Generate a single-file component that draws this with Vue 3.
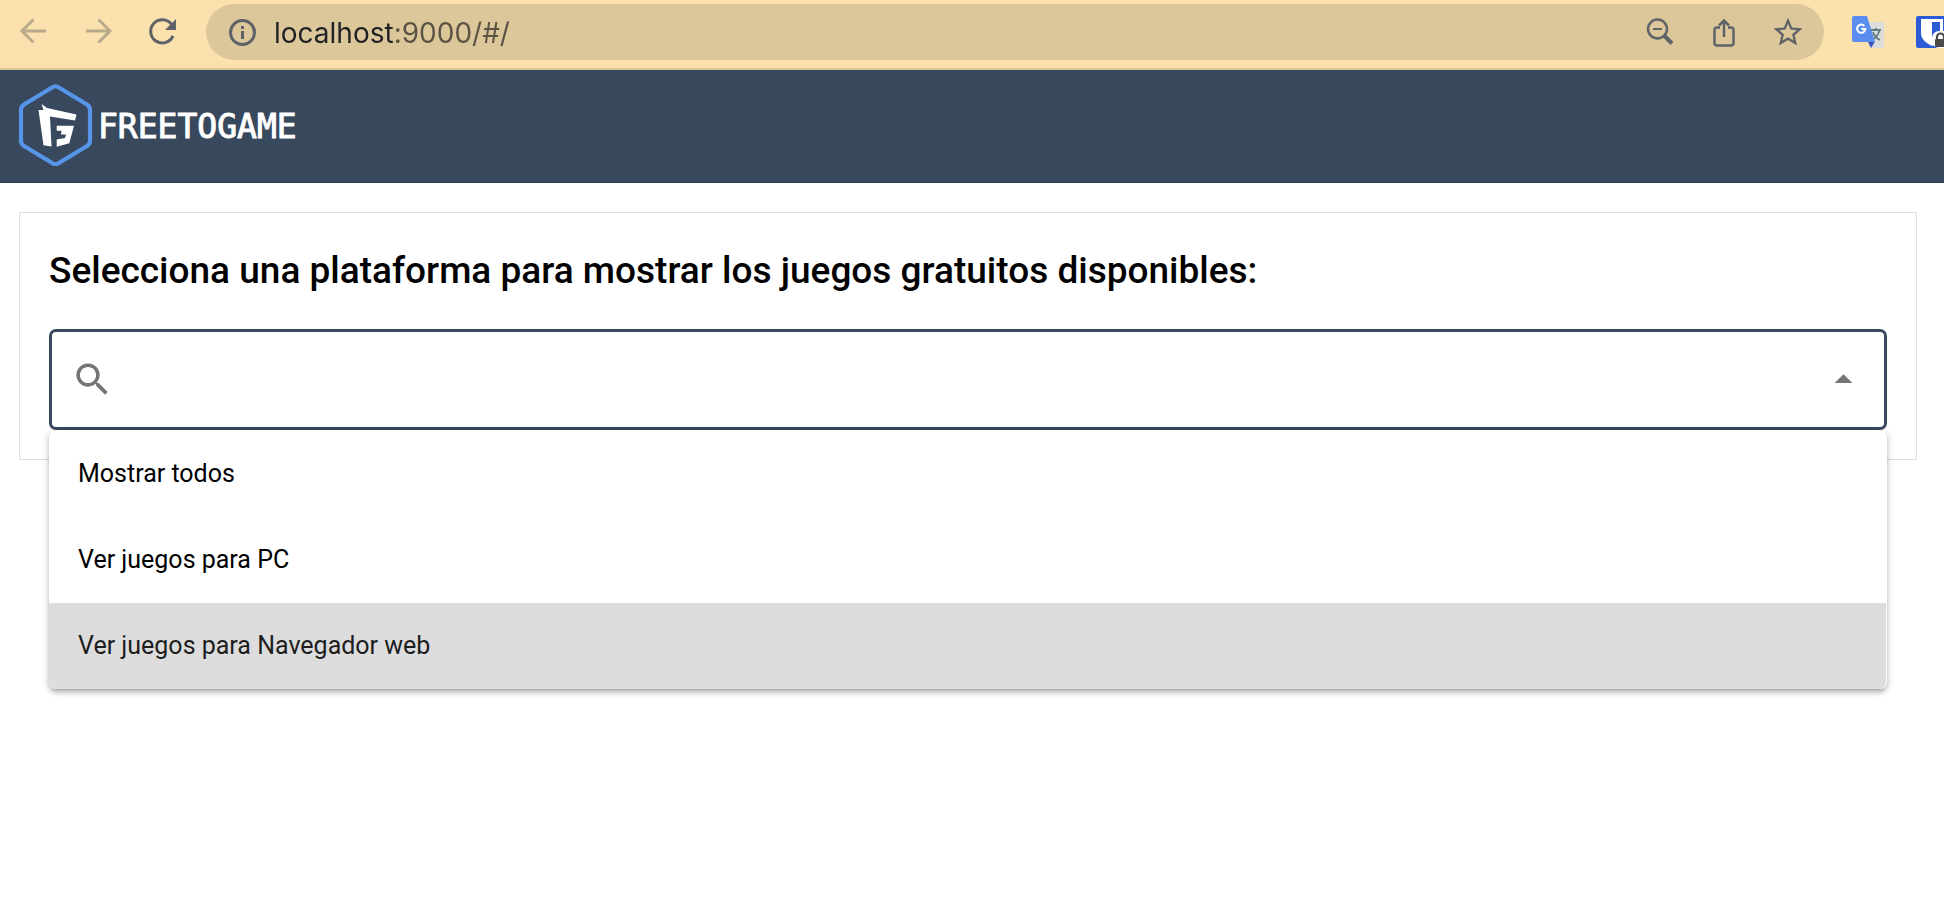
<script setup>
import { ref } from 'vue'

const address = ref('localhost:9000/#/')
const open = ref(true)
const selected = ref('')
const highlighted = ref(2)
const platforms = ['Mostrar todos', 'Ver juegos para PC', 'Ver juegos para Navegador web']

function choose(option) {
  selected.value = option
  open.value = false
}
</script>

<template>
  <div class="page">
    <div class="toolbar">
      <button class="tool faded" type="button" aria-label="Atrás">
        <svg width="40" height="40" viewBox="0 0 40 40"><path d="M32 19H8M19.500 7.500 8 19l11.500 11.500" /></svg>
      </button>
      <button class="tool faded" type="button" aria-label="Adelante">
        <svg width="40" height="40" viewBox="0 0 40 40"><path d="M8 19h24M20.500 7.500 32 19 20.500 30.500" /></svg>
      </button>
      <button class="tool" type="button" aria-label="Recargar">
        <svg width="40" height="40" viewBox="0 0 40 40">
          <path d="M29.500 12.300A11.600 11.600 0 1 0 31 23.800" />
          <path class="solid" d="M34 7v11H23z" />
        </svg>
      </button>
      <div class="omnibox">
        <button class="tool" type="button" aria-label="Información del sitio">
          <svg width="40" height="40" viewBox="0 0 40 40">
            <circle cx="20.500" cy="20.500" r="12" />
            <path class="solid" d="M19 14h3v3h-3zM19 19h3v8h-3z" />
          </svg>
        </button>
        <input v-model="address" class="address" type="text" aria-label="Dirección" spellcheck="false" />
        <div class="actions">
          <button class="tool" type="button" aria-label="Zoom">
            <svg width="40" height="40" viewBox="0 0 40 40">
              <circle class="medium" cx="17.500" cy="17" r="9.500" />
              <path d="M13 17h9" class="thin" />
              <path d="m24.500 24 7.500 7.500" class="thick" />
            </svg>
          </button>
          <button class="tool" type="button" aria-label="Compartir">
            <svg width="40" height="40" viewBox="0 0 40 40">
              <path class="medium" d="M16 15.500h-3a2.500 2.500 0 0 0-2.500 2.500v13a2.500 2.500 0 0 0 2.500 2.500h14a2.500 2.500 0 0 0 2.500-2.500V18a2.500 2.500 0 0 0-2.500-2.500h-3M20 25V9M15 13.500 20 8.500 25 13.500" />
            </svg>
          </button>
          <button class="tool" type="button" aria-label="Añadir a marcadores">
            <svg width="40" height="40" viewBox="0 0 40 40">
              <path class="solid" transform="translate(2.500 2.800) scale(1.460)" d="M22 9.240l-7.190-.62L12 2 9.190 8.630 2 9.240l5.460 4.730L5.820 21 12 17.270 18.180 21l-1.630-7.030L22 9.240zM12 15.400l-3.760 2.270 1-4.280-3.320-2.880 4.380-.38L12 6.100l1.710 4.040 4.380.38-3.320 2.880 1 4.280L12 15.400z" />
            </svg>
          </button>
        </div>
      </div>
      <div class="extensions">
        <button class="extension" type="button" aria-label="Traductor">
          <svg width="32" height="32" viewBox="0 0 32 32">
            <path fill="#dcdcda" d="M13 6h17a2 2 0 0 1 2 2v22a2 2 0 0 1-2 2H19z" />
            <path fill="none" stroke="#607d86" stroke-width="1.800" d="M19 14h10M24 12v2M27.500 14c-1 5-4 8-7.500 10M21 16c1 4 4 6.500 7 8" />
            <path fill="#3a4fc0" d="m16 26 7-0.500L19 32z" />
            <path fill="#5b8def" d="M2 0h13l8 26H2a2 2 0 0 1-2-2V2a2 2 0 0 1 2-2z" />
            <path fill="none" stroke="#fff" stroke-width="2" d="M12.300 10A4.100 4.100 0 1 0 13.300 13H9.500" />
          </svg>
        </button>
        <button class="extension" type="button" aria-label="Gestor de contraseñas">
          <svg width="32" height="32" viewBox="0 0 32 32">
            <rect width="32" height="32" rx="2" fill="#2b5cd6" />
            <path fill="#fff" d="M5 3h22v14c0 6-5 10-11 13C10 27 5 23 5 17z" />
            <path fill="#2b5cd6" d="M16 6h8v12c0 3-3 6-8 8z" />
            <rect x="16" y="15" width="18" height="17" rx="7" fill="#fff" />
            <path fill="none" stroke="#4a4a4a" stroke-width="2.200" d="M21 24v-3a3.500 3.500 0 0 1 7 0v3" />
            <rect x="19" y="23" width="13" height="8" rx="1" fill="#4a4a4a" />
          </svg>
        </button>
      </div>
    </div>

    <header class="header">
      <a class="brand" href="#/">
        <svg width="75" height="82" viewBox="0 0 75 82" aria-hidden="true">
          <path fill="none" stroke="#5695e8" stroke-width="4.200" stroke-linejoin="round" d="M35 3q2.500-1.500 5 0L69 20.500q3 2 3 5.500v31q0 3-3 5L40 79.500q-2.500 1.500-5 0L6 62q-3-2-3-5V26q0-3.500 3-5.500z" />
          <path fill="#fff" d="m23.500 20 5.500 4 29.500 6.500-1.500 6-25-4 1.500 30-8-1.200L20.500 26h5z" />
          <path fill="#fff" d="M38.700 41.700H56l-4.700 17.600-12.600 3.400v-7.200L47 54l1-3.500h-5l.5-3.700h-4.800z" />
        </svg>
        <span class="wordmark">FREETOGAME</span>
      </a>
    </header>

    <main class="content">
      <section class="card">
        <h1 id="platform-label" class="title">Selecciona una plataforma para mostrar los juegos gratuitos disponibles:</h1>
        <div class="select">
          <div class="field" @click="open = !open">
            <svg class="search" width="43" height="43" viewBox="0 0 24 24" aria-hidden="true">
              <path d="M15.500 14h-.79l-.28-.27A6.471 6.471 0 0 0 16 9.500 6.500 6.500 0 1 0 9.500 16c1.610 0 3.090-.59 4.230-1.570l.27.280v.79l5 4.990L20.490 19l-4.990-5zm-6 0C7.010 14 5 11.990 5 9.500S7.010 5 9.500 5 14 7.010 14 9.500 11.990 14 9.500 14z" />
            </svg>
            <input
              class="value"
              type="text"
              role="combobox"
              readonly
              :value="selected"
              aria-labelledby="platform-label"
              aria-controls="platform-list"
              :aria-expanded="open"
            />
            <svg class="caret" :class="{ closed: !open }" width="43" height="43" viewBox="0 0 24 24" aria-hidden="true">
              <path d="m7 14 5-5 5 5z" />
            </svg>
          </div>
          <ul v-if="open" id="platform-list" class="menu" role="listbox" aria-labelledby="platform-label">
            <li
              v-for="(option, index) in platforms"
              :key="option"
              class="option"
              :class="{ active: index === highlighted }"
              role="option"
              :aria-selected="option === selected"
              @mouseenter="highlighted = index"
              @click="choose(option)"
            >{{ option }}</li>
          </ul>
        </div>
      </section>
    </main>
  </div>
</template>

<style>
body {
  margin: 0;
  background: #fff;
}
</style>

<style scoped>
.page {
  min-height: 100vh;
  overflow-x: hidden;
  font-family: Roboto, "Liberation Sans", sans-serif;
  color: #000;
}

button {
  flex: none;
  padding: 0;
  border: 0;
  background: none;
  cursor: pointer;
}

svg {
  display: block;
}

.toolbar {
  display: flex;
  align-items: center;
  gap: 24px;
  padding: 4px 0 8px 14px;
  border-bottom: 2px solid #dac69a;
  background: #fbe1ae;
}

.tool {
  width: 40px;
  height: 40px;
  color: #5f6368;
}

.tool svg {
  fill: none;
  stroke: currentColor;
  stroke-width: 3;
}

.tool .solid {
  fill: currentColor;
  stroke: none;
}

.tool .thin {
  stroke-width: 2;
}

.tool .medium {
  stroke-width: 2.5;
}

.tool .thick {
  stroke-width: 4;
}

.faded {
  color: #b9aa8b;
}

.omnibox {
  display: flex;
  flex: 1;
  align-items: center;
  min-width: 0;
  height: 56px;
  padding: 0 16px;
  border-radius: 28px;
  box-sizing: border-box;
  background: #dcc79b;
}

.address {
  flex: 1;
  min-width: 0;
  height: 40px;
  margin-left: 12px;
  padding: 2px 0 0;
  border: 0;
  outline: 0;
  background: linear-gradient(90deg, #202124 120px, #5a5243 120px);
  background-clip: text;
  -webkit-text-fill-color: transparent;
  color: #202124;
  font: 28px Inter, "Liberation Sans", sans-serif;
}

.actions {
  display: flex;
  gap: 24px;
}

.extensions {
  display: flex;
  gap: 32px;
  margin-left: 4px;
}

.extension {
  width: 32px;
  height: 32px;
}

.extension:last-child {
  width: 28px;
  overflow: hidden;
}

.header {
  display: flex;
  padding: 14px 18px 16px;
  border-bottom: 1px solid #2d3d53;
  background: #38485d;
}

.brand {
  display: flex;
  align-items: center;
  gap: 5px;
  color: #fff;
  text-decoration: none;
}

.wordmark {
  padding-top: 2px;
  font: 33px "DejaVu Sans Mono", "Liberation Mono", monospace;
  -webkit-text-stroke: 1px #fff;
}

.content {
  padding: 29px 27px 29px 19px;
}

.card {
  padding: 29px;
  border: 1px solid #dedede;
}

.title {
  margin: 0 0 29px;
  font-size: 37px;
  font-weight: 500;
  line-height: 58px;
}

.select {
  position: relative;
}

.field {
  display: flex;
  align-items: center;
  height: 101px;
  padding: 0 19px;
  border: 3px solid #38485d;
  border-radius: 7px;
  box-sizing: border-box;
  cursor: pointer;
}

.search,
.caret {
  flex: none;
  fill: #757575;
}

.closed {
  transform: rotate(180deg);
}

.value {
  flex: 1;
  min-width: 0;
  height: 60px;
  padding: 0 16px;
  border: 0;
  outline: 0;
  background: none;
  font: 25px Roboto, "Liberation Sans", sans-serif;
  cursor: pointer;
}

.menu {
  position: absolute;
  top: 100%;
  right: 0;
  left: 0;
  z-index: 1;
  margin: 0;
  padding: 1px 1px 0 0;
  border-radius: 7px;
  background: #fff;
  box-shadow: 0 2px 9px rgba(0, 0, 0, 0.2), 0 4px 4px rgba(0, 0, 0, 0.14), 0 5px 2px -4px rgba(0, 0, 0, 0.12);
  list-style: none;
}

.option {
  padding: 0 29px;
  font-size: 25px;
  line-height: 86px;
  cursor: pointer;
}

.option:last-child {
  border-radius: 0 0 7px 7px;
}

.active {
  background: #ddd;
  color: #1d1d1d;
}
</style>
